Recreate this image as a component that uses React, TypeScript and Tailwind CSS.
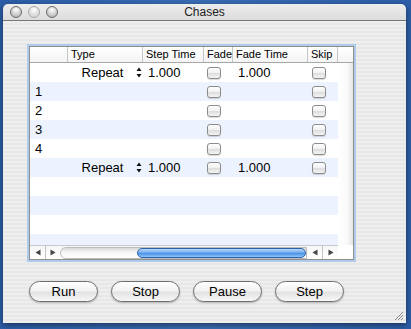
import React from "react";

type Row = {
  num?: string;
  repeat?: boolean;
  checks?: boolean;
};

const rows: Row[] = [
  { repeat: true, checks: true },
  { num: "1", checks: true },
  { num: "2", checks: true },
  { num: "3", checks: true },
  { num: "4", checks: true },
  { repeat: true, checks: true },
  {},
  {},
  {},
  {},
];

function Checkbox() {
  return (
    <div className="w-[14px] h-[12px] rounded-[3px] border border-[#8c8c8c] bg-[linear-gradient(#ffffff,#f0f0f0_50%,#dedede_55%,#f4f4f4)] shadow-[0_1px_1px_rgba(0,0,0,0.15)]" />
  );
}

function Stepper() {
  return (
    <svg width="6" height="11" viewBox="0 0 6 11" className="block">
      <path d="M3 0.5 L5.5 4 L0.5 4 Z" fill="#111" />
      <path d="M3 10.5 L5.5 7 L0.5 7 Z" fill="#111" />
    </svg>
  );
}

function Arrow({ dir }: { dir: "l" | "r" }) {
  return (
    <svg width="6" height="7" viewBox="0 0 6 7" className="block">
      {dir === "l" ? (
        <path d="M0.5 3.5 L5.5 0.5 L5.5 6.5 Z" fill="#444" />
      ) : (
        <path d="M5.5 3.5 L0.5 0.5 L0.5 6.5 Z" fill="#444" />
      )}
    </svg>
  );
}

function Light({ dim }: { dim?: boolean }) {
  return (
    <div
      className={
        dim
          ? "w-[12px] h-[12px] rounded-full border border-[#a9a9a9] bg-[radial-gradient(circle_at_50%_30%,#ffffff,#e2e2e2_45%,#cfcfcf)]"
          : "w-[12px] h-[12px] rounded-full border border-[#6b6b6b] bg-[radial-gradient(circle_at_50%_30%,#ffffff,#d6d6d6_45%,#a9a9a9)]"
      }
    />
  );
}

function AquaButton({ label }: { label: string }) {
  return (
    <button className="w-[69px] h-[21px] rounded-full border border-[#6e6e6e] bg-[linear-gradient(#ffffff,#f3f3f3_45%,#e3e3e3_55%,#f7f7f7)] shadow-[0_1px_2px_rgba(0,0,0,0.25)] text-[13px] leading-none text-black flex items-center justify-center">
      {label}
    </button>
  );
}

const headers = [
  { label: "", w: "w-[38px]" },
  { label: "Type", w: "w-[75px]" },
  { label: "Step Time", w: "w-[61px]" },
  { label: "Fade", w: "w-[29px]" },
  { label: "Fade Time", w: "w-[75px]" },
  { label: "Skip", w: "w-[30px]" },
  { label: "", w: "w-[15px]" },
];

export default function App() {
  return (
    <div className="w-[411px] h-[329px] overflow-hidden bg-[linear-gradient(90deg,#2d5ea8,#3b6db5_50%,#2d5ea8)] font-['Liberation_Sans',Arial,sans-serif] pt-[4px] pl-[3px]">
      <div className="w-[403px] h-[319px] rounded-t-[5px] overflow-hidden flex flex-col shadow-[0_2px_6px_rgba(0,0,0,0.5)]">
        {/* title bar */}
        <div className="h-[17px] relative flex items-center border-b border-[#767676] bg-[linear-gradient(#ededed,#dcdcdc)] shrink-0">
          <div className="flex items-center gap-[6px] pl-[7px]">
            <Light />
            <Light dim />
            <Light />
          </div>
          <div className="absolute inset-0 flex items-center justify-center text-[12px] text-[#222]">
            Chases
          </div>
        </div>

        {/* content */}
        <div className="flex-1 relative pl-[26px] pt-[25px] bg-[repeating-linear-gradient(to_bottom,#eeeeee_0px,#eeeeee_2px,#e7e7e7_2px,#e7e7e7_4px)]">
          <div className="w-[325px] h-[214px] border border-[#8e8e8e] shadow-[0_0_0_2px_#aecbea] bg-white flex flex-col overflow-hidden">
            {/* header */}
            <div className="h-[16px] flex border-b border-[#a8a8a8] bg-[linear-gradient(#ffffff,#f4f4f4)] shrink-0">
              {headers.map((h, i) => (
                <div
                  key={i}
                  className={`${h.w} h-full pl-[3px] text-[11px] leading-[15px] text-black ${
                    i < headers.length - 1 ? "border-r border-[#c6c6c6]" : ""
                  } shrink-0`}
                >
                  {h.label}
                </div>
              ))}
            </div>

            {/* body */}
            <div className="h-[182px] flex overflow-hidden shrink-0">
              <div className="w-[308px] shrink-0">
                {rows.map((r, i) => (
                  <div
                    key={i}
                    className={`h-[19px] flex items-center text-[13px] text-black ${
                      i % 2 === 1 ? "bg-[#edf3fe]" : "bg-white"
                    }`}
                  >
                    <div className="w-[38px] pl-[5px] shrink-0">{r.num}</div>
                    <div className="w-[75px] shrink-0 flex items-center">
                      {r.repeat && (
                        <>
                          <div className="flex-1 text-center pl-[1px]">Repeat</div>
                          <div className="w-[7px] pr-[1px]">
                            <Stepper />
                          </div>
                        </>
                      )}
                    </div>
                    <div className="w-[61px] pl-[5px] shrink-0">
                      {r.repeat ? "1.000" : ""}
                    </div>
                    <div className="w-[29px] pl-[3px] shrink-0">
                      {r.checks && <Checkbox />}
                    </div>
                    <div className="w-[75px] pl-[5px] shrink-0">
                      {r.repeat ? "1.000" : ""}
                    </div>
                    <div className="w-[30px] pl-[4px] shrink-0">
                      {r.checks && <Checkbox />}
                    </div>
                  </div>
                ))}
              </div>
              <div className="w-[15px] bg-[linear-gradient(90deg,#ffffff,#fafafa_60%,#e4e4e4)]" />
            </div>

            {/* horizontal scroller */}
            <div className="h-[14px] flex shrink-0">
              <div className="w-[308px] flex border-t border-[#c9c9c9] bg-[linear-gradient(#f6f6f6,#ffffff)]">
                <div className="w-[16px] flex items-center justify-center border-r border-[#c4c4c4]">
                  <Arrow dir="l" />
                </div>
                <div className="w-[14px] flex items-center justify-center">
                  <Arrow dir="r" />
                </div>
                <div className="flex-1 flex items-center pt-[1px]">
                  <div className="h-[12px] flex-1 flex rounded-l-full border border-[#bdbdbd] bg-[linear-gradient(#d8d8d8,#f7f7f7_45%,#ffffff)]">
                    <div className="w-[76px]" />
                    <div className="flex-1 rounded-full border border-[#2f63ad] bg-[linear-gradient(#b7d6fa,#7ab3f0_40%,#4c93e6_55%,#8cc6fb)]" />
                  </div>
                </div>
                <div className="w-[16px] flex items-center justify-center border-r border-[#c4c4c4]">
                  <Arrow dir="l" />
                </div>
                <div className="w-[15px] flex items-center justify-center">
                  <Arrow dir="r" />
                </div>
              </div>
              <div className="w-[15px] bg-white" />
            </div>
          </div>

          <div className="flex gap-[13px] mt-[21px]">
            <AquaButton label="Run" />
            <AquaButton label="Stop" />
            <AquaButton label="Pause" />
            <AquaButton label="Step" />
          </div>

          {/* resize grip */}
          <svg
            width="10"
            height="10"
            viewBox="0 0 10 10"
            className="absolute right-[2px] bottom-[2px]"
          >
            <path d="M9 1 L1 9 M9 4 L4 9 M9 7 L7 9" stroke="#8a8a8a" strokeWidth="1" />
          </svg>
        </div>
      </div>
    </div>
  );
}
